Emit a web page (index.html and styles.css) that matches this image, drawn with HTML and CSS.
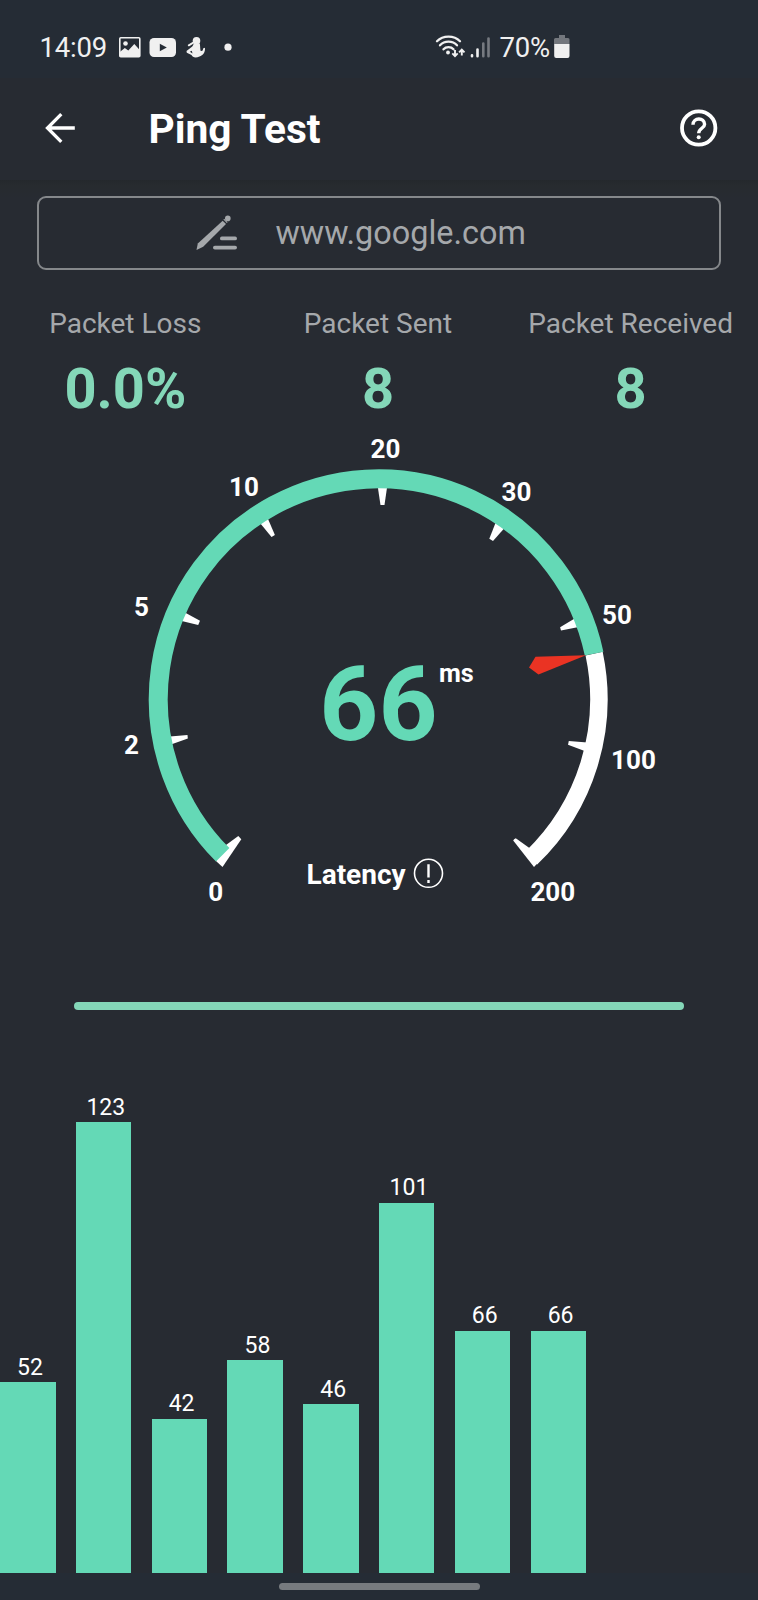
FILE: index.html
```html
<!DOCTYPE html>
<html lang="en">
<head>
    <meta charset="UTF-8">
    <meta name="viewport" content="width=device-width, initial-scale=1.0">
    <title>Ping Test</title>
    <link rel="stylesheet" href="styles.css">
</head>
<body>
    <div class="status-bar">
        <div class="status-left">
            <span class="clock">14:09</span>
            <svg class="status-icons" width="120" height="28" viewBox="0 0 120 28">
                <rect x="1.800" y="4.800" width="20" height="19" rx="1" fill="none" stroke="#f0f0f0" stroke-width="1.600"/>
                <circle cx="7.500" cy="10.500" r="2.300" fill="#f0f0f0"/>
                <path d="M1.800 19l5-4 3.500 2.500 6-6.500 5 5.500V24H1.800z" fill="#f0f0f0"/>
                <rect x="31.500" y="5" width="26.500" height="19" rx="4.500" fill="#f0f0f0"/>
                <path d="M41.800 10.800l7 3.800-7 3.700z" fill="#252c35"/>
                <circle cx="78.500" cy="7.700" r="3.800" fill="#f0f0f0"/>
                <path d="M70.800 12.300l5.500-3.300" stroke="#f0f0f0" stroke-width="2" stroke-linecap="round"/>
                <path d="M75.500 10.500h6.300c.5 2.500.2 5 .9 7.500 2 .6 2.500-1.500 2.300-2.500l2-.7c.4 4.500-2 7.700-5.500 8.700-4 1.800-7 .8-8-1.500l-4.700-2.200-.3-1.800 4.500-3.500c1.500-1 2.500-2.200 2.500-4z" fill="#f0f0f0"/>
                <path d="M71.800 18.700l2-1 .7 2.800z" fill="#252c35"/>
                <circle cx="110" cy="14.200" r="3.600" fill="#f0f0f0"/>
            </svg>
        </div>
        <div class="status-right">
            <svg width="62" height="28" viewBox="0 0 62 28">
                <g fill="none" stroke="#f0f0f0" stroke-width="2.300" stroke-linecap="round">
                    <path d="M2 8.200c6-6.200 17-6.200 23 0"/>
                    <path d="M5 12.300c4.500-4.800 12.500-4.800 17 0"/>
                    <path d="M8.500 16.300c2.500-2.800 7.500-2.800 10 0"/>
                </g>
                <circle cx="13" cy="19.500" r="1.900" fill="#f0f0f0"/>
                <g fill="none" stroke="#f0f0f0" stroke-width="1.900">
                    <path d="M20 17v6M17.300 20.400l2.700 2.800 2.700-2.800"/>
                    <path d="M26.800 22.500v-6M24.100 19.300l2.700-2.800 2.700 2.800"/>
                </g>
                <g stroke-width="2.600" stroke-linecap="round">
                    <path d="M37 22.200v1M42.500 16.500v6.700" stroke="#f0f0f0"/>
                    <path d="M48.300 10.500v12.700M53.500 5.500v17.700" stroke="#767a80"/>
                </g>
            </svg>
            <span class="battery-text">70%</span>
            <svg class="battery" width="16" height="24" viewBox="0 0 16 24">
                <path d="M5 0h6v3h-6zM1.500 3h12.500a1.500 1.500 0 0 1 1.500 1.500V9H0V4.500a1.500 1.500 0 0 1 1.500-1.500z" fill="#73777d"/>
                <path d="M.2 9h15.300v12a2 2 0 0 1-2 2H2.200a2 2 0 0 1-2-2z" fill="#f0f0f0"/>
            </svg>
        </div>
    </div>

    <header class="app-bar">
        <svg width="30" height="30" viewBox="0 0 30 30" fill="none" stroke="#fff" stroke-width="3.300">
            <path d="M29.800 15H2.800M16.300 1.200L2.500 15l13.800 13.800"/>
        </svg>
        <h1>Ping Test</h1>
        <svg class="help" width="38" height="38" viewBox="0 0 38 38" fill="none" stroke="#fff">
            <circle cx="18.700" cy="19" r="16.700" stroke-width="3.800"/>
            <path d="M13 15.700c0-7.600 11.600-7.600 11.600-.5 0 4-5.900 4.200-5.900 9" stroke-width="3.400"/>
            <circle cx="18.700" cy="28.200" r="2" fill="#fff" stroke="none"/>
        </svg>
    </header>

    <main>
        <div class="host">
            <svg width="42" height="36" viewBox="0 0 42 36" fill="#a5a8ab">
                <path d="M26.700 5.800l3.300 3.300L7.200 31.700.5 35l1.300-6.500z"/>
                <circle cx="31.800" cy="3.400" r="2.800"/>
                <path d="M27.800 4.200l3.400 3.400" stroke="#a5a8ab" stroke-width="1.200"/>
                <rect x="24" y="21.500" width="17" height="3.800" rx="1.900"/>
                <rect x="17" y="30.700" width="24" height="3.800" rx="1.900"/>
            </svg>
            <span>www.google.com</span>
        </div>

        <div class="stats">
            <div class="stat">
                <div class="stat-label">Packet Loss</div>
                <div class="stat-value">0.0%</div>
            </div>
            <div class="stat">
                <div class="stat-label">Packet Sent</div>
                <div class="stat-value">8</div>
            </div>
            <div class="stat">
                <div class="stat-label">Packet Received</div>
                <div class="stat-value">8</div>
            </div>
        </div>

        <svg class="gauge" width="758" height="500" viewBox="0 430 758 500">
            <!-- ticks -->
            <g fill="#fff">
                <path d="M238.300 836l3 3.200L222.500 867l-6.500-6 10-16z"/>
                <path d="M170 736.400l17.500-1.400.3 3.600L171 744.500z"/>
                <path d="M183 611.500l17 9.200-1.800 4.300-16.500-4z"/>
                <path d="M267.500 517.800l7.400 17.200-3.400 2L260 523z"/>
                <path d="M377.800 487h9.300l-2.600 18h-4z"/>
                <path d="M495.500 523l9 5-11.500 13-3.700-2.300z"/>
                <path d="M575.500 618l3.300 9-17.800 3.600-.9-3.300z"/>
                <path d="M568.800 741l18.500 1.400V752l-19.300-7.300z"/>
                <path d="M515.800 838.200l15 10.800 7 14-3.800 4-20.800-26.500q.5-1.500 2.600-2.300z"/>
            </g>
            <!-- track and current value -->
            <path d="M594.100 653.600A220.500 220.500 0 0 1 531.100 858.200" fill="none" stroke="#fff" stroke-width="17.500"/>
            <path d="M222.700 854.800A220.300 220.300 0 1 1 594.100 653.600" fill="none" stroke="#64d9b6" stroke-width="19"/>
            <path d="M586 655.200l-50.500 1.600-6.500 10.700 9.500 7z" fill="#ea3323"/>

            <g class="gauge-labels">
                <text x="215.800" y="900.500">0</text>
                <text x="131.500" y="753.700">2</text>
                <text x="141.500" y="615.500">5</text>
                <text x="244" y="496.300">10</text>
                <text x="385.500" y="457.500">20</text>
                <text x="516.500" y="501.200">30</text>
                <text x="617" y="623.500">50</text>
                <text x="633.500" y="769.300">100</text>
                <text x="552.800" y="900.500">200</text>
            </g>
            <text class="gauge-value" x="319.300" y="739.700">66</text>
            <text class="gauge-unit" x="439" y="682">ms</text>
            <text class="gauge-title" x="306.500" y="884.300">Latency</text>
            <circle cx="428.500" cy="873.300" r="14" fill="none" stroke="#fff" stroke-width="1.600"/>
            <path d="M428.500 864.200v13.200M428.500 880v3" stroke="#fff" stroke-width="2.400"/>
        </svg>

        <div class="progress"></div>

        <div class="chart">
            <div class="col"><span>52</span><div class="bar" style="height: 190.500px"></div></div>
            <div class="col"><span>123</span><div class="bar" style="height: 450.200px"></div></div>
            <div class="col"><span>42</span><div class="bar" style="height: 153.800px"></div></div>
            <div class="col"><span>58</span><div class="bar" style="height: 212.400px"></div></div>
            <div class="col"><span>46</span><div class="bar" style="height: 168.500px"></div></div>
            <div class="col"><span>101</span><div class="bar" style="height: 370px"></div></div>
            <div class="col"><span>66</span><div class="bar" style="height: 241.700px"></div></div>
            <div class="col"><span>66</span><div class="bar" style="height: 241.700px"></div></div>
        </div>
    </main>

    <div class="nav-bar"><div class="nav-handle"></div></div>
</body>
</html>
```

FILE: styles.css
```css
body {
    margin: 0;
    height: 1600px;
    display: flex;
    flex-direction: column;
    overflow: hidden;
    font-family: Roboto, sans-serif;
    background-color: #272b32;
    color: #fff;
}
svg {
    display: block;
    flex: none;
}
.status-bar {
    height: 78px;
    box-sizing: border-box;
    padding: 31px 0 0 39.500px;
    display: flex;
    background-color: #252c35;
    color: #f0f0f0;
    font-size: 27.500px;
    line-height: 34px;
}
.status-left {
    display: flex;
    width: 395px;
}
.clock {
    width: 78.500px;
    letter-spacing: -0.2px;
}
.status-icons {
    margin-top: 2px;
}
.status-right {
    display: flex;
}
.status-right svg {
    margin-top: 2px;
}
.battery-text {
    width: 54px;
    margin-left: 3px;
    letter-spacing: -0.200px;
}
.status-right .battery {
    margin-top: 4px;
}
.app-bar {
    height: 102px;
    box-sizing: border-box;
    padding: 0 40px 3px 44.500px;
    display: flex;
    align-items: center;
}
h1 {
    flex: 1;
    margin: 3px 0 0 74px;
    font-size: 40.700px;
    line-height: 48px;
    font-weight: 700;
}
main {
    flex: 1;
    display: flex;
    flex-direction: column;
    background: linear-gradient(#24282c, #272b2f 6px, #272b32 18px);
}
.host {
    height: 74px;
    box-sizing: border-box;
    margin: 15.500px 37.500px 0 37px;
    padding: 1px 0 0 157px;
    display: flex;
    align-items: center;
    gap: 37.500px;
    border: 2px solid #85888b;
    border-radius: 9px;
    font-size: 32.400px;
    color: #a5a8ab;
}
.host svg {
    margin-top: -1px;
}
.stats {
    display: grid;
    grid-template-columns: 1fr 1fr 1fr;
    text-align: center;
    height: 160.500px;
    margin: 0 1px 0 -1px;
}
.stat-label {
    margin-top: 37.300px;
    font-size: 28px;
    line-height: 34px;
    color: #a5a8ab;
}
.stat-value {
    margin-top: 15.200px;
    font-size: 56px;
    line-height: 66px;
    font-weight: 700;
    color: #84d7b8;
}
.gauge-labels {
    font-size: 26px;
    font-weight: 700;
    fill: #fff;
    text-anchor: middle;
}
.gauge-value {
    font-size: 103px;
    font-weight: 700;
    fill: #64d9b6;
}
.gauge-unit {
    font-size: 25.200px;
    font-weight: 700;
    fill: #fff;
}
.gauge-title {
    font-size: 28px;
    font-weight: 700;
    fill: #fff;
}
.progress {
    height: 8px;
    margin: 72px 74px 0 73.500px;
    border-radius: 4px;
    background-color: #84d7b8;
}
.chart {
    flex: 1;
    display: flex;
    align-items: flex-end;
    gap: 20.300px;
}
.col {
    width: 55.500px;
    text-align: center;
}
.col span {
    display: block;
    padding-left: 4.500px;
    margin-bottom: 1.400px;
    font-size: 23px;
    line-height: 27px;
}
.bar {
    background-color: #64d9b6;
}
.nav-bar {
    height: 27.500px;
    display: flex;
    background-color: #252c35;
}
.nav-handle {
    width: 201px;
    height: 7.500px;
    margin: 10px auto 0;
    border-radius: 4px;
    background-color: #777b7f;
}
```
